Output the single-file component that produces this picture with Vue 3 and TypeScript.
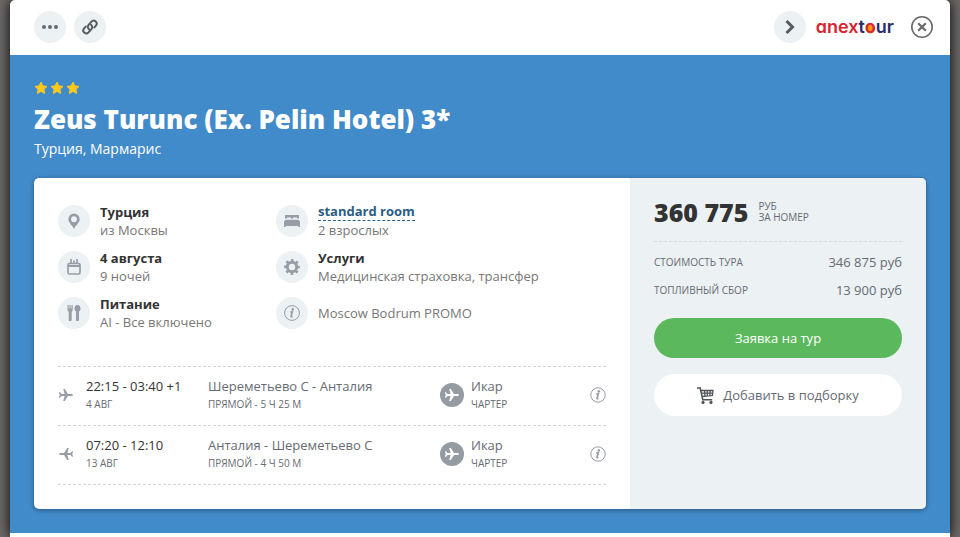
<script setup lang="ts">
type IconName = 'pin' | 'bed' | 'calendar' | 'gear' | 'food' | 'info'

interface Detail {
  icon: IconName
  title?: string
  text: string
  link?: boolean
}

interface Flight {
  time: string
  date: string
  route: string
  duration: string
  airline: string
  kind: string
  back: boolean
}

const stars = 3

const details: Detail[] = [
  { icon: 'pin', title: 'Турция', text: 'из Москвы' },
  { icon: 'bed', title: 'standard room', text: '2 взрослых', link: true },
  { icon: 'calendar', title: '4 августа', text: '9 ночей' },
  { icon: 'gear', title: 'Услуги', text: 'Медицинская страховка, трансфер' },
  { icon: 'food', title: 'Питание', text: 'AI - Все включено' },
  { icon: 'info', text: 'Moscow Bodrum PROMO' },
]

const flights: Flight[] = [
  { time: '22:15 - 03:40 +1', date: '4 авг', route: 'Шереметьево C - Анталия', duration: 'прямой - 5 ч 25 м', airline: 'Икар', kind: 'чартер', back: false },
  { time: '07:20 - 12:10', date: '13 авг', route: 'Анталия - Шереметьево C', duration: 'прямой - 4 ч 50 м', airline: 'Икар', kind: 'чартер', back: true },
]

const costs = [
  { label: 'Стоимость тура', value: '346 875 руб' },
  { label: 'Топливный сбор', value: '13 900 руб' },
]

const planePath = 'M15 8c0-.6-.8-.9-1.800-.9H10L6.800 2H5.200L6.600 7.100 3.600 6.900 2 5.200H.9L1.700 8 .9 10.800H2l1.600-1.700 3-.2L5.200 14h1.600L10 8.900h3.200c1 0 1.800-.3 1.800-.9z'
</script>

<template>
  <main class="modal">
    <header class="topbar">
      <button class="round" type="button" aria-label="Ещё">
        <svg width="16" height="4" viewBox="0 0 16 4" fill="#666b72"><circle cx="2" cy="2" r="2" /><circle cx="8" cy="2" r="2" /><circle cx="14" cy="2" r="2" /></svg>
      </button>
      <button class="round" type="button" aria-label="Ссылка">
        <svg width="16" height="16" viewBox="0 0 16 16" fill="none" stroke="#555b62" stroke-width="2" stroke-linecap="round">
          <path d="M7 10.200a3 3 0 0 1-.4-4.300l2.900-3.300a3 3 0 0 1 4.200-.2 3 3 0 0 1 .2 4.200L12.300 8.400" />
          <path d="M9 5.800a3 3 0 0 1 .4 4.300l-2.900 3.300a3 3 0 0 1-4.200.2 3 3 0 0 1-.2-4.200L3.700 7.600" />
        </svg>
      </button>
      <span class="spacer"></span>
      <button class="round" type="button" aria-label="Далее">
        <svg width="16" height="16" viewBox="0 0 16 16" fill="none" stroke="#555b62" stroke-width="3"><path d="M4.500 2l6 6-6 6" /></svg>
      </button>
      <span class="logo"><span>anex</span><span class="navy">t</span><span class="sun">o</span><span class="navy">ur</span></span>
      <button class="close" type="button" aria-label="Закрыть">
        <svg width="24" height="24" viewBox="0 0 24 24" fill="none" stroke="#6a6a6a"><circle cx="12" cy="12" r="10.200" stroke-width="1.600" /><path d="M8.200 8.200l7.600 7.600M15.800 8.200l-7.600 7.600" stroke-width="2.200" /></svg>
      </button>
    </header>

    <section class="hero">
      <div class="stars">
        <svg v-for="n in stars" :key="n" width="14" height="14" viewBox="0 0 14 14" fill="#ffc91a" stroke="#ffc91a" stroke-width="1" stroke-linejoin="round"><path d="M7 1l1.800 3.900 4.200.5-3.100 2.900.8 4.200L7 10.400l-3.700 2.100.8-4.200L1 5.400l4.200-.5z" /></svg>
      </div>
      <h1>Zeus Turunc (Ex. Pelin Hotel) 3*</h1>
      <p class="place">Турция, Мармарис</p>

      <div class="card">
        <div class="tour">
          <ul class="details">
            <li v-for="d in details" :key="d.icon">
              <span class="round">
                <svg v-if="d.icon === 'pin'" width="14" height="16" viewBox="0 0 16 18" fill="#979da6"><path fill-rule="evenodd" d="M8 .5A6.500 6.500 0 0 0 1.500 7C1.500 10.800 6 14 8 18c2-4 6.500-7.200 6.500-11A6.500 6.500 0 0 0 8 .5zm0 3.200a3.300 3.300 0 1 1 0 6.600 3.300 3.300 0 0 1 0-6.600z" /></svg>
                <svg v-else-if="d.icon === 'bed'" width="16" height="14" viewBox="0 0 16 14" fill="#979da6"><path d="M1 1h14v3.600h-1.600L12.600 3.600H9.400L8.600 4.600H7.400L6.600 3.600H3.400L2.600 4.600H1z" /><path d="M1.500 5.800h13L16 7.500V13h-1.600v-1H1.600v1H0V7.500z" /></svg>
                <svg v-else-if="d.icon === 'calendar'" width="14" height="16" viewBox="0 0 14 16" fill="none" stroke="#979da6" stroke-width="1.700"><rect x="1" y="4.500" width="12" height="10.500" rx="1.500" /><path d="M1 7h12" stroke-width="2" /><path d="M4 0v5M10 0v5M7 1.500v3" /></svg>
                <svg v-else-if="d.icon === 'gear'" width="16" height="16" viewBox="0 0 16 16" fill="none" stroke="#979da6"><circle cx="8" cy="8" r="4.700" stroke-width="3" /><circle cx="8" cy="8" r="6.700" stroke-width="2.400" stroke-dasharray="2.630 2.630" stroke-dashoffset="1.315" /></svg>
                <svg v-else-if="d.icon === 'food'" width="14" height="16" viewBox="0 0 14 16" fill="#979da6"><path d="M.5 0h1.200v3.500h.8V0h1.200v3.500h.8V0h1.200v5.500L4.700 6.700v8a1.500 1.500 0 0 1-3 0v-8L.5 5.500z" /><path d="M10.500 0C12.400 0 13.500 1.700 13.500 3.500c0 1.500-.7 2.600-1.500 3.100v8.100a1.500 1.500 0 0 1-3 0V6.600C8.200 6.100 7.500 5 7.500 3.500 7.500 1.700 8.600 0 10.500 0z" /></svg>
                <svg v-else width="16" height="16" viewBox="0 0 16 16"><circle cx="8" cy="8" r="7.400" fill="none" stroke="#979da6" /><circle cx="8.800" cy="4.200" r="1.200" fill="#979da6" /><path d="M6.300 7.200l2-.6-1.200 4.600q-.2 1 1.300.1" fill="none" stroke="#979da6" stroke-width="1.700" /></svg>
              </span>
              <div>
                <a v-if="d.link" class="room" href="#">{{ d.title }}</a>
                <strong v-else-if="d.title">{{ d.title }}</strong>
                <span class="sub">{{ d.text }}</span>
              </div>
            </li>
          </ul>

          <div class="flights">
            <div v-for="f in flights" :key="f.time" class="flight">
              <svg class="plane" :class="{ back: f.back }" width="16" height="16" viewBox="0 0 16 16" fill="#999fa8"><path :d="planePath" /></svg>
              <div><span class="time">{{ f.time }}</span><small>{{ f.date }}</small></div>
              <div><span>{{ f.route }}</span><small>{{ f.duration }}</small></div>
              <div class="airline">
                <span class="badge"><svg width="16" height="16" viewBox="0 0 16 16" fill="#fff"><path :d="planePath" /></svg></span>
                <div><span>{{ f.airline }}</span><small>{{ f.kind }}</small></div>
              </div>
              <button class="more" type="button" aria-label="О рейсе">
                <svg width="16" height="16" viewBox="0 0 16 16"><circle cx="8" cy="8" r="7.200" fill="none" stroke="#979da6" /><circle cx="8.800" cy="4.200" r="1.200" fill="#979da6" /><path d="M6.300 7.200l2-.6-1.200 4.600q-.2 1 1.300.1" fill="none" stroke="#979da6" stroke-width="1.700" /></svg>
              </button>
            </div>
          </div>
        </div>

        <aside class="price">
          <div class="total"><strong>360 775</strong><span>руб<br />за номер</span></div>
          <dl>
            <div v-for="c in costs" :key="c.label"><dt>{{ c.label }}</dt><dd>{{ c.value }}</dd></div>
          </dl>
          <button class="order" type="button">Заявка на тур</button>
          <button class="collect" type="button">
            <svg width="17" height="17" viewBox="0 0 17 17" fill="none" stroke="#50555c" stroke-width="1.600"><path d="M0 1h3.200l2.600 11.800h9.400" /><path d="M4 3.500h12l-.6 5L5 9.500M4.500 6.200h11M7.500 3.500l.5 6M10.300 3.500v6M13.200 3.500l-.3 5.500" stroke-width="1.300" /><circle cx="6" cy="15.400" r="1.600" fill="#50555c" stroke="none" /><circle cx="14" cy="15.400" r="1.600" fill="#50555c" stroke="none" /></svg>
            Добавить в подборку
          </button>
        </aside>
      </div>
    </section>
  </main>
</template>

<style>
body {
  background: #6e6b69;
}
</style>

<style scoped>
* {
  box-sizing: border-box;
}

.modal {
  margin: 0 10px;
  min-height: 100vh;
  background: #fff;
  border-radius: 5px 5px 0 0;
  box-shadow: 0 0 14px #000;
  font: 13px/18px "Open Sans", sans-serif;
  color: #666b73;
}

button {
  border: 0;
  padding: 0;
  background: none;
  font: inherit;
  color: inherit;
  cursor: pointer;
}

svg {
  display: block;
  flex: none;
}

.topbar {
  display: flex;
  align-items: center;
  gap: 8px;
  height: 55px;
  padding: 0 16px 1px 24px;
}

.round {
  display: flex;
  flex: none;
  align-items: center;
  justify-content: center;
  width: 32px;
  height: 32px;
  border-radius: 50%;
  background: #ecf1f4;
}

.spacer {
  flex: 1;
}

.logo {
  display: flex;
  margin: 0 8px 0 2px;
  font: 600 18px/24px Inter, sans-serif;
  font-feature-settings: "cv11";
  color: #d9232e;
}

.navy {
  color: #2c2a6d;
}

.sun {
  background: radial-gradient(circle at 50% 58%, #f7941d 4px, transparent 5px);
}

.hero {
  padding: 24px;
  background: #428bca;
}

.stars {
  display: flex;
  gap: 2px;
  padding-top: 2px;
}

h1 {
  margin: 8px 0 4px;
  font-size: 26px;
  font-weight: 800;
  line-height: 32px;
  color: #fff;
}

.place {
  margin: 0 0 19px;
  font-size: 14px;
  line-height: 20px;
  color: #fff;
}

.card {
  display: grid;
  grid-template-columns: minmax(0, 1fr) 296px;
  border-radius: 5px;
  overflow: hidden;
  background: #fff;
  box-shadow: 0 1px 5px rgba(0, 0, 0, 0.4);
}

.tour {
  padding: 24px;
}

.details {
  display: grid;
  grid-template-columns: 218px 1fr;
  row-gap: 10px;
  margin: 0 0 35px;
  padding: 0;
  list-style: none;
}

.details li {
  display: flex;
  align-items: center;
  gap: 10px;
}

strong,
.sub {
  display: block;
}

strong {
  font-weight: 700;
  color: #333;
}

.sub {
  color: #777;
}

.room {
  display: table;
  border-bottom: 1px dashed #2a5d84;
  font-weight: 700;
  color: #2a5d84;
  text-decoration: none;
}

.flights {
  border-bottom: 1px dashed #d3d6d9;
}

.flight {
  display: grid;
  grid-template-columns: 28px 122px 1fr 150px 16px;
  align-items: center;
  padding: 10px 0 12px;
  border-top: 1px dashed #d3d6d9;
}

.flight div > span:not(.badge),
small {
  display: block;
}

.flight .time {
  color: #333;
}

small {
  font-size: 10px;
  line-height: 18px;
  text-transform: uppercase;
}

.back {
  transform: scaleX(-1);
}

.airline {
  display: flex;
  align-items: center;
  gap: 7px;
}

.badge {
  display: flex;
  align-items: center;
  justify-content: center;
  width: 24px;
  height: 24px;
  border-radius: 50%;
  background: #959ba3;
}

.price {
  padding: 18px 24px 24px;
  background: #ecf1f4;
}

.total {
  display: flex;
  align-items: center;
  gap: 10px;
  padding-bottom: 13px;
  border-bottom: 1px dashed #d5dadd;
}

.total strong {
  font-size: 25px;
  font-weight: 800;
  line-height: 32px;
}

.total span {
  font-size: 10px;
  line-height: 11px;
  text-transform: uppercase;
}

dl {
  display: grid;
  gap: 10px;
  margin: 11px 0 19px;
}

dl div {
  display: flex;
  justify-content: space-between;
}

dt {
  font-size: 10px;
  text-transform: uppercase;
}

dd {
  margin: 0;
}

.order,
.collect {
  display: flex;
  align-items: center;
  justify-content: center;
  gap: 9px;
  width: 100%;
  height: 40px;
  border-radius: 21px;
}

.order {
  margin-bottom: 16px;
  background: #5cb85c;
  color: #fff;
}

.collect {
  height: 42px;
  background: #fff;
}
</style>
